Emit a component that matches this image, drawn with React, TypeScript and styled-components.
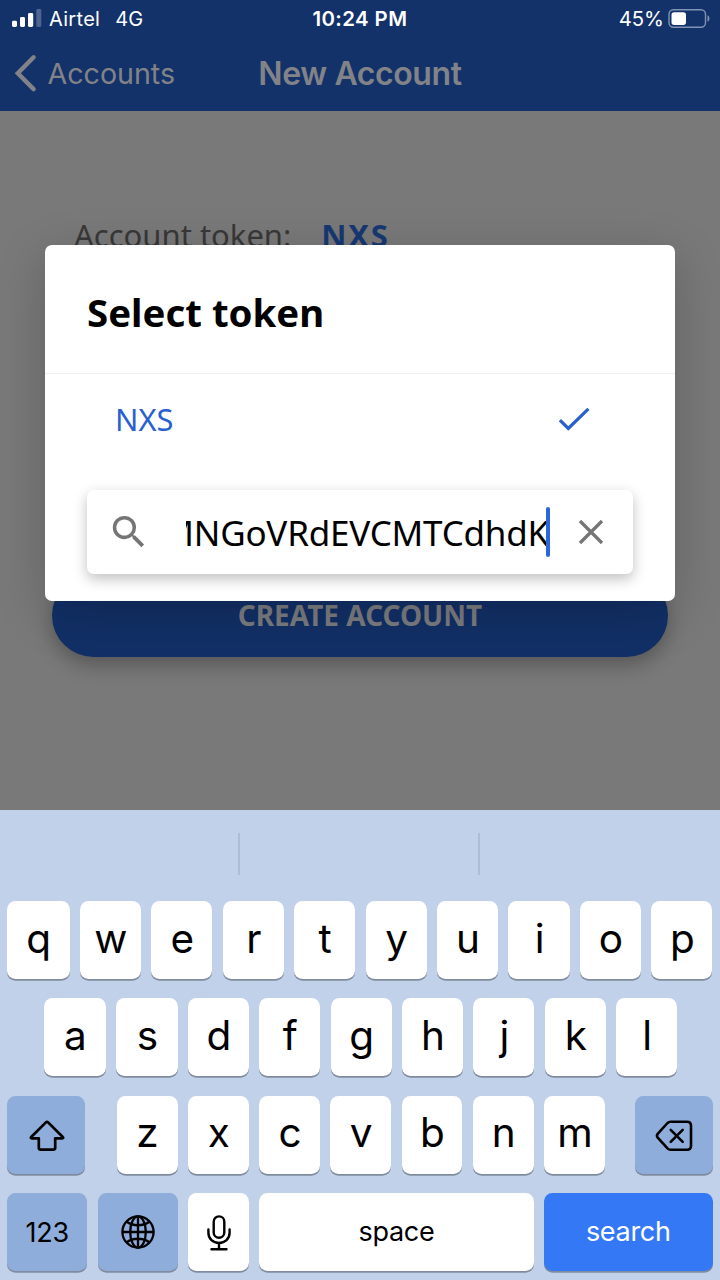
import React from 'react';
import styled, { createGlobalStyle } from 'styled-components';

const system = '"Inter", "Liberation Sans", sans-serif';
const noto = '"Noto Sans", "Open Sans", sans-serif';

const GlobalStyle = createGlobalStyle`
  * { box-sizing: border-box; }
  body { margin: 0; }
`;

const Screen = styled.div`
  position: relative;
  width: 720px;
  height: 1280px;
  overflow: hidden;
  display: flex;
  flex-direction: column;
  background: #797979;
  font-family: ${system};
`;

const Header = styled.header`
  height: 111px;
  background: #13326a;
  flex: none;
`;

const StatusBar = styled.div`
  height: 36px;
  padding: 1px 9px 0 12px;
  display: grid;
  grid-template-columns: 300px auto 1fr;
  align-items: center;
  color: #fff;
  font-size: 20px;
  line-height: 36px;
`;

const StatusGroup = styled.div<{ $end?: boolean }>`
  display: flex;
  align-items: center;
  gap: ${p => (p.$end ? 4 : 0)}px;
  justify-content: ${p => (p.$end ? 'flex-end' : 'flex-start')};
`;

const Label = styled.span<{ $size?: number; $spacing?: number; $weight?: number; $left?: number }>`
  font-size: ${p => p.$size ?? 20}px;
  letter-spacing: ${p => p.$spacing ?? 0}px;
  font-weight: ${p => p.$weight ?? 400};
  margin-left: ${p => p.$left ?? 0}px;
  white-space: nowrap;
`;

const NavBar = styled.nav`
  height: 75px;
  padding: 0 14px;
  display: grid;
  grid-template-columns: 1fr auto 1fr;
  align-items: center;
  color: #828388;
  line-height: 75px;
`;

const Back = styled.div`
  display: flex;
  align-items: center;
`;

const Content = styled.main`
  flex: 1;
  padding: 102px 52px 0;
  font-family: ${noto};
`;

const TokenRow = styled.div`
  display: flex;
  align-items: center;
  height: 44px;
  padding-left: 22px;
  gap: 30px;
  color: #383838;
`;

const TokenValue = styled.strong`
  font-size: 31px;
  letter-spacing: 1.7px;
  color: #173873;
`;

const CreateButton = styled.button`
  display: block;
  width: 616px;
  height: 83px;
  margin-top: 317px;
  border: 0;
  border-radius: 42px;
  background: #123067;
  color: #7c7d80;
  font: 700 28px/83px ${noto};
  padding: 0;
  box-shadow: 0 8px 20px rgba(0, 0, 0, 0.28);
`;

const Dialog = styled.section`
  position: absolute;
  left: 45px;
  top: 245px;
  width: 629.5px;
  height: 355.5px;
  border-radius: 7px;
  background: #fff;
  box-shadow: 0 12px 50px rgba(0, 0, 0, 0.2);
  font-family: ${noto};
`;

const DialogTitle = styled.h2`
  margin: 0;
  height: 129px;
  padding: 0 42px;
  border-bottom: 1.5px solid #efefef;
  font-size: 38.4px;
  line-height: 134px;
  font-weight: 700;
  color: #000;
`;

const Option = styled.div`
  display: flex;
  align-items: center;
  justify-content: space-between;
  height: 90px;
  padding: 0 85px 0 70px;
  color: #2861cf;
`;

const SearchBox = styled.div`
  display: flex;
  align-items: center;
  height: 84px;
  margin: 26px 41.5px 0 42px;
  padding: 0 29px 1px 24px;
  border-radius: 7px;
  background: #fff;
  box-shadow: 0 5px 14px rgba(0, 0, 0, 0.25);
`;

const SearchField = styled.div`
  display: flex;
  justify-content: flex-end;
  align-items: center;
  width: 364px;
  height: 60px;
  margin-left: 40.5px;
  overflow: hidden;
  color: #000;
`;

const SearchText = styled.span`
  padding-top: 2px;
  font-size: 35px;
  letter-spacing: -0.22px;
  white-space: nowrap;
`;

const Caret = styled.i`
  flex: none;
  width: 3.5px;
  height: 50px;
  margin-left: -3px;
  border-radius: 2px;
  background: #2d66dc;
`;

const Spacer = styled.div`
  flex: 1;
`;

const Keyboard = styled.section`
  height: 470px;
  flex: none;
  background: #c1d1ea;
  color: #000;
`;

const Suggestions = styled.div`
  height: 91px;
  padding: 23px 0 26px;
  display: grid;
  grid-template-columns: 240px 240px 240px;
`;

const Suggestion = styled.div<{ $divided?: boolean }>`
  border-right: ${p => (p.$divided ? '2px solid #adbdd9' : '0')};
`;

const Rows = styled.div`
  display: flex;
  flex-direction: column;
  gap: 19.4px;
`;

const KeyRow = styled.div<{ $columns: string; $left?: number; $right?: number }>`
  display: grid;
  grid-template-columns: ${p => p.$columns};
  column-gap: 10.3px;
  height: 78px;
  padding: 0 ${p => p.$right ?? 7.5}px 0 ${p => p.$left ?? 7}px;
`;

const tones = {
  light: ['#fff', '#000'],
  dark: ['#8faddb', '#000'],
  primary: ['#3478f6', '#fff'],
};

const Key = styled.div<{ $tone?: keyof typeof tones; $column?: number }>`
  display: flex;
  align-items: center;
  justify-content: center;
  grid-column: ${p => p.$column ?? 'auto'};
  border-radius: 8.5px;
  background: ${p => tones[p.$tone ?? 'light'][0]};
  color: ${p => tones[p.$tone ?? 'light'][1]};
  box-shadow: 0 1.7px 0 #808b9e;
  line-height: 1;
`;

const LetterKey = styled(Key)`
  padding: 0 0 2.5px 1px;
  font-size: 40.5px;
  font-weight: 400;
`;

const WordKey = styled(Key)<{ $lift?: number }>`
  padding-bottom: ${p => p.$lift ?? 0}px;
  font-size: 27px;
  letter-spacing: -0.3px;
`;

const IconKey = styled(Key)<{ $drop?: number }>`
  padding-top: ${p => p.$drop ?? 0}px;
  padding-left: 1px;
`;

const Signal = () => (
  <svg width="30" height="20" viewBox="0 0 30 20" fill="#fff">
    <rect x="0" y="11.8" width="5" height="6.2" rx="1.4" />
    <rect x="8" y="8" width="5" height="10" rx="1.4" />
    <rect x="16" y="4" width="5.2" height="14" rx="1.4" />
    <rect x="24.3" y="0" width="5" height="18" rx="1.4" opacity=".25" />
  </svg>
);

const Battery = () => (
  <svg width="43" height="20" viewBox="0 0 43 20">
    <rect x="1" y=".7" width="36.5" height="17.5" rx="4.5" fill="none" stroke="#8093b4" strokeWidth="1.4" />
    <rect x="3.5" y="3.2" width="14.5" height="12.7" rx="2.6" fill="#fff" />
    <path d="M39.5 6.2c2.6 1 2.6 5.5 0 6.5z" fill="#8093b4" />
  </svg>
);

const Chevron = () => (
  <svg width="24" height="40" viewBox="0 0 24 40" fill="none" stroke="currentColor" strokeWidth="4.4" strokeLinecap="round">
    <path d="M19.6 3.3 3.8 19.2 19.6 35.1" />
  </svg>
);

const Check = () => (
  <svg width="31" height="24" viewBox="0 0 31 24" fill="none" stroke="#2861cf" strokeWidth="3.2">
    <path d="M.9 13.2 9.3 21.5 29.4 1.9" />
  </svg>
);

const Search = () => (
  <svg width="34" height="34" viewBox="2 2.5 19 19" fill="#757575">
    <path d="M15.5 14h-.79l-.28-.27A6.47 6.47 0 0 0 16 9.5 6.5 6.5 0 1 0 9.5 16c1.61 0 3.09-.59 4.23-1.57l.27.28v.79l5 4.99L20.49 19zm-6 0C7.01 14 5 11.99 5 9.5S7.01 5 9.5 5 14 7.01 14 9.5 11.99 14 9.5 14" />
  </svg>
);

const Clear = () => (
  <svg width="26" height="26" viewBox="0 0 26 26" stroke="#757575" strokeWidth="3.3">
    <path d="M2 2 24 24M24 2 2 24" />
  </svg>
);

const Shift = () => (
  <svg width="36" height="32" viewBox="0 0 36 32" fill="none" stroke="currentColor" strokeWidth="2.7" strokeLinejoin="round">
    <path d="M16.9 2.4Q18 1.4 19.1 2.4L33.8 17q1 1.3-.6 1.3h-7v9.5q0 1.8-1.8 1.8H11.6q-1.8 0-1.8-1.8v-9.5H2.8q-1.6 0-.6-1.3z" />
  </svg>
);

const Backspace = () => (
  <svg width="38" height="32" viewBox="0 0 38 32" fill="none" stroke="currentColor" strokeWidth="2.6" strokeLinecap="round" strokeLinejoin="round">
    <path d="M15.5 1.7H32q4 0 4 4v20q0 4-4 4H15.5q-1.7 0-3-1.3L2.7 17.7q-1.5-1.9 0-3.8L12.5 3q1.3-1.3 3-1.3z" />
    <path d="m15.7 9.8 12 12m0-12-12 12" />
  </svg>
);

const Globe = () => (
  <svg width="34" height="34" viewBox="0 0 34 34" fill="none" stroke="currentColor" strokeWidth="2.3">
    <circle cx="17" cy="17" r="15.6" />
    <ellipse cx="17" cy="17" rx="7.8" ry="15.6" />
    <path d="M17 1.3v31.4M1.3 17h31.4M5.5 6.5c6 5 17 5 23 0M5.5 27.5c6-5 17-5 23 0" />
  </svg>
);

const Mic = () => (
  <svg width="24" height="36" viewBox="0 0 24 36" fill="none" stroke="currentColor" strokeWidth="2.4" strokeLinecap="round">
    <rect x="6.7" y="1.4" width="10.6" height="21.3" rx="5.3" />
    <path d="M1.4 14.5v3.3C1.4 24 6 28 12 28s10.6-4 10.6-10.2v-3.3M12 28v6M4.5 34.3h15" />
  </svg>
);

const letters = (row: string) => row.split('').map(c => <LetterKey key={c}>{c}</LetterKey>);

export default function App() {
  return (
    <Screen>
      <GlobalStyle />
      <Header>
        <StatusBar>
          <StatusGroup>
            <Signal />
            <Label $left={7} $spacing={0.3}>Airtel</Label>
            <Label $left={15}>4G</Label>
          </StatusGroup>
          <Label $weight={600} $size={20.4} $spacing={0.4} $left={0.5}>10:24 PM</Label>
          <StatusGroup $end>
            <Label $size={20.3}>45%</Label>
            <Battery />
          </StatusGroup>
        </StatusBar>
        <NavBar>
          <Back>
            <Chevron />
            <Label $left={9.5} $size={28.6}>Accounts</Label>
          </Back>
          <Label $size={32} $weight={600} $spacing={-0.4}>New Account</Label>
        </NavBar>
      </Header>

      <Content>
        <TokenRow>
          <Label $size={31}>Account token:</Label>
          <TokenValue>NXS</TokenValue>
        </TokenRow>
        <CreateButton>CREATE ACCOUNT</CreateButton>
      </Content>

      <Dialog>
        <DialogTitle>Select token</DialogTitle>
        <Option>
          <Label $size={30.8}>NXS</Label>
          <Check />
        </Option>
        <SearchBox>
          <Search />
          <SearchField>
            <SearchText>MNGoVRdEVCMTCdhdK</SearchText>
            <Caret />
          </SearchField>
          <Spacer />
          <Clear />
        </SearchBox>
      </Dialog>

      <Keyboard>
        <Suggestions>
          <Suggestion $divided />
          <Suggestion $divided />
          <Suggestion />
        </Suggestions>
        <Rows>
          <KeyRow $columns="62.5px repeat(9, 1fr)">{letters('qwertyuiop')}</KeyRow>
          <KeyRow $columns="62.5px repeat(8, 1fr)" $left={43.7} $right={42.8}>{letters('asdfghjkl')}</KeyRow>
          <KeyRow $columns="78px 11px repeat(7, 1fr) 9px 78px">
            <IconKey $tone="dark" $drop={3}><Shift /></IconKey>
            <Spacer />
            {letters('zxcvbnm')}
            <IconKey $tone="dark" $column={11} $drop={3}><Backspace /></IconKey>
          </KeyRow>
          <KeyRow $columns="80.4px 80.4px 60.5px 1fr 168.5px">
            <WordKey $tone="dark">123</WordKey>
            <IconKey $tone="dark"><Globe /></IconKey>
            <IconKey $drop={2}><Mic /></IconKey>
            <WordKey $lift={2}>space</WordKey>
            <WordKey $tone="primary" $lift={2}>search</WordKey>
          </KeyRow>
        </Rows>
      </Keyboard>
    </Screen>
  );
}
